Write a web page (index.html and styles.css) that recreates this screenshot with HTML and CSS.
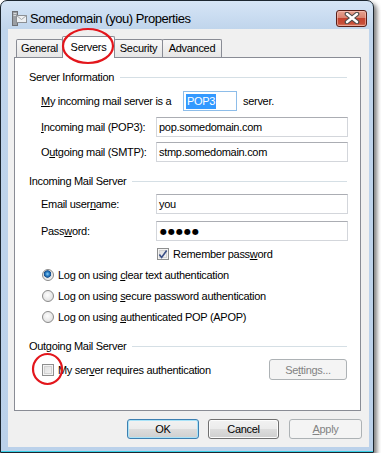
FILE: index.html
```html
<!DOCTYPE html>
<html lang="en">
<head>
    <meta charset="UTF-8">
    <title>Somedomain (you) Properties</title>
    <link rel="stylesheet" href="styles.css">
</head>
<body>

<div class="window">
    <div class="titlebar">
        <svg class="app-icon" width="15" height="15" viewBox="0 0 15 15">
            <rect x="0.5" y="0.5" width="5" height="14" fill="#9a9ea3" stroke="#6d7075"/>
            <rect x="1.5" y="2" width="3" height="1" fill="#d8dadc"/>
            <rect x="1.5" y="4" width="3" height="1" fill="#d8dadc"/>
            <rect x="4.5" y="4.5" width="10" height="7" fill="#eef0f2" stroke="#8b8f94"/>
            <path d="M4.5 4.5 L9.5 8.5 L14.5 4.5" fill="none" stroke="#a3a7ab"/>
        </svg>
        <span class="title">Somedomain (you) Properties</span>
        <div class="close">
            <svg width="16" height="12" viewBox="0 0 16 12">
                <path d="M3 2 L13 10 M13 2 L3 10" stroke="#4b4b4b" stroke-width="4.6" stroke-linecap="round"/>
                <path d="M3 2 L13 10 M13 2 L3 10" stroke="#ffffff" stroke-width="2.4" stroke-linecap="round"/>
            </svg>
        </div>
    </div>

    <div class="client">
        <div class="tabs">
            <div class="tab tab-general">General</div>
            <div class="tab tab-servers active">Servers</div>
            <div class="tab tab-security">Security</div>
            <div class="tab tab-advanced">Advanced</div>
        </div>

        <div class="panel">
            <div class="group-head head-info"><span>Server Information</span></div>
            <div class="field row-type">
                <label class="lbl-type"><u>M</u>y incoming mail server is a</label>
                <span class="input input-type"><span class="selected">POP3</span></span>
                <span class="after">server.</span>
            </div>
            <div class="field row-in">
                <label><u>I</u>ncoming mail (POP3):</label>
                <span class="input">pop.somedomain.com</span>
            </div>
            <div class="field row-out">
                <label>O<u>u</u>tgoing mail (SMTP):</label>
                <span class="input">stmp.somedomain.com</span>
            </div>

            <div class="group-head head-incoming"><span>Incoming Mail Server</span></div>
            <div class="field row-user">
                <label>Email user<u>n</u>ame:</label>
                <span class="input">you</span>
            </div>
            <div class="field row-pass">
                <label>Pass<u>w</u>ord:</label>
                <span class="input dots">●●●●●</span>
            </div>
            <div class="check-row row-remember">
                <span class="checkbox checked">
                    <svg width="11" height="11" viewBox="0 0 11 11"><path d="M1.5 5.5 L4 8.8 L9.5 1.2" fill="none" stroke="#3a4f86" stroke-width="1.8"/></svg>
                </span>
                <span>Remember pass<u>w</u>ord</span>
            </div>
            <div class="check-row radio-row radio-first">
                <span class="radio on"></span>
                <span>Log on using <u>c</u>lear text authentication</span>
            </div>
            <div class="check-row radio-row">
                <span class="radio"></span>
                <span>Log on using <u>s</u>ecure password authentication</span>
            </div>
            <div class="check-row radio-row">
                <span class="radio"></span>
                <span>Log on using <u>a</u>uthenticated POP (APOP)</span>
            </div>

            <div class="group-head head-outgoing"><span>Outgoing Mail Server</span></div>
            <div class="check-row row-auth">
                <span class="checkbox"></span>
                <span>My ser<u>v</u>er requires authentication</span>
                <span class="btn btn-settings disabled">Se<u>t</u>tings...</span>
            </div>
        </div>

        <div class="actions">
            <span class="btn btn-ok default">OK</span>
            <span class="btn btn-cancel">Cancel</span>
            <span class="btn btn-apply disabled"><u>A</u>pply</span>
        </div>
    </div>

    <!-- hand drawn highlights over the screenshot -->
    <svg class="mark mark-tab" width="56" height="40" viewBox="0 0 56 40">
        <ellipse cx="28" cy="20" rx="25" ry="17" fill="none" stroke="#e3161c" stroke-width="2.2"/>
    </svg>
    <svg class="mark mark-check" width="36" height="36" viewBox="0 0 36 36">
        <ellipse cx="17.5" cy="18" rx="14.5" ry="15" fill="none" stroke="#e3161c" stroke-width="2.2"/>
    </svg>
</div>

</body>
</html>
```

FILE: styles.css
```css
* {
    box-sizing: border-box;
}
body {
    margin: 0;
    background-color: #fff;
    font-family: "Liberation Sans", Arial, sans-serif;
    font-size: 11px;
    letter-spacing: -0.3px;
    color: #000;
}
.window {
    position: relative;
    width: 374px;
    height: 453px;
    border: 1px solid #1c2630;
    border-radius: 7px 7px 0 0;
    background: linear-gradient(#d6e5f6, #c0d5ec 28px, #bbd1ea);
    padding: 0 4px 5px 7px;
    display: flex;
    flex-direction: column;
    box-shadow: 3px 3px 4px rgba(0, 0, 0, 0.5), inset 0 -1px 0 #38d0e6;
}
.titlebar {
    height: 28px;
    padding-top: 6px;
    display: flex;
    align-items: center;
}
.app-icon {
    margin-left: 4px;
    flex-shrink: 0;
}
.title {
    margin-left: 3px;
    font-size: 13px;
    letter-spacing: -0.45px;
}
.close {
    margin-left: auto;
    margin-right: 2px;
    width: 31px;
    height: 17px;
    border: 1px solid #5a1f18;
    border-radius: 3px;
    background: linear-gradient(#e7a392, #d98370 45%, #c4432f 50%, #c8503a 85%, #dc8a72);
    box-shadow: inset 0 0 0 1px rgba(255, 210, 200, 0.5);
    display: flex;
    align-items: center;
    justify-content: center;
}
.client {
    height: 418px;
    background-color: #f0f0f0;
    padding: 7px 8px 8px 6px;
    display: flex;
    flex-direction: column;
}
.tabs {
    display: flex;
    align-items: flex-end;
    height: 21px;
    padding-left: 2px;
}
.tab {
    height: 18px;
    border: 1px solid #898c95;
    border-bottom: none;
    border-radius: 2px 2px 0 0;
    background: linear-gradient(#f7f7f7, #e6e6e6);
    display: flex;
    align-items: center;
    justify-content: center;
    padding-bottom: 1px;
}
.tab + .tab {
    margin-left: -1px;
}
.tab-general { width: 47px; }
.tab-servers { width: 53px; }
.tab-security { width: 49px; }
.tab-advanced { width: 60px; }
.tab.active {
    height: 22px;
    margin-bottom: -1px;
    background: #fff;
    position: relative;
    z-index: 1;
    padding-bottom: 2px;
}
.panel {
    height: 354px;
    border: 1px solid #898c95;
    background-color: #fff;
    padding: 0 12px 0 14px;
}
.group-head {
    height: 16px;
    display: flex;
    align-items: center;
}
.group-head::after {
    content: "";
    flex: 1;
    height: 1px;
    margin: 0 1px 0 6px;
    background-color: #d5dfe5;
}
.head-info { margin-top: 11px; }
.head-incoming { margin-top: 11px; }
.head-outgoing { margin-top: 13px; }
.field {
    display: flex;
    align-items: center;
    height: 20px;
    padding-left: 12px;
}
.field label {
    width: 115px;
}
.row-type { margin-top: 6px; }
.row-in { margin-top: 6px; }
.row-out { margin-top: 5px; }
.row-user { margin-top: 5px; }
.row-pass { margin-top: 7px; }
.field .lbl-type {
    width: 142px;
}
.input {
    width: 192px;
    height: 20px;
    border: 1px solid #d3d6db;
    border-top-color: #abadb3;
    padding-left: 2px;
    display: flex;
    align-items: center;
}
.input-type {
    width: 54px;
    border-color: #8dbde9;
    padding-left: 2px;
}
.selected {
    background-color: #3399ff;
    color: #fff;
    padding: 1px 1px 2px;
}
.after {
    margin-left: 6px;
}
.dots {
    font-family: "DejaVu Sans", sans-serif;
    font-size: 8px;
    letter-spacing: 1px;
    padding-left: 3px;
}
.check-row {
    display: flex;
    align-items: center;
    height: 16px;
    gap: 4px;
}
.row-remember {
    margin-top: 5px;
    padding-left: 128px;
}
.radio-row {
    margin-top: 5px;
    padding-left: 13px;
}
.checkbox {
    width: 12px;
    height: 12px;
    border: 1px solid #8e8f8f;
    background: linear-gradient(135deg, #dcdcdc, #f6f6f6);
    box-shadow: inset 0 0 0 1px #f4f4f4, inset 0 0 0 2px #d2d2d2;
    display: flex;
    align-items: center;
    justify-content: center;
}
.radio {
    width: 12px;
    height: 12px;
    border-radius: 50%;
    border: 1px solid #8a8a8a;
    background: radial-gradient(circle at 45% 40%, #fdfdfd, #d8d8d8);
}
.radio.on {
    background: radial-gradient(circle at 45% 40%, #8fd1f8 0, #2a7ec4 2px, #174f8e 3.4px, #e0e0e0 4px, #f4f4f4 6px);
}
.row-auth {
    height: 21px;
    margin-top: 5px;
    padding-left: 13px;
}
.btn {
    height: 20px;
    border: 1px solid #707070;
    border-radius: 3px;
    background: linear-gradient(#f2f2f2, #ebebeb 50%, #dddddd 50%, #cfcfcf);
    box-shadow: inset 0 0 0 1px #fcfcfc;
    display: flex;
    align-items: center;
    justify-content: center;
}
.btn.default {
    border-color: #3c7fb1;
    box-shadow: inset 0 0 0 1px #a9e3f8;
}
.btn.disabled {
    border-color: #adb2b5;
    background: #f4f4f4;
    box-shadow: none;
    color: #838383;
}
.btn-settings {
    width: 78px;
    height: 21px;
    margin-left: auto;
    margin-right: 1px;
}
.actions {
    display: flex;
    justify-content: flex-end;
    margin-top: 8px;
    margin-right: -1px;
}
.btn-ok { width: 72px; margin-right: 9px; }
.btn-cancel { width: 71px; margin-right: 10px; }
.btn-apply { width: 73px; }
.mark {
    position: absolute;
}
.mark-tab {
    left: 59px;
    top: 25px;
    z-index: 2;
}
.mark-check {
    left: 29px;
    top: 350px;
}
```
